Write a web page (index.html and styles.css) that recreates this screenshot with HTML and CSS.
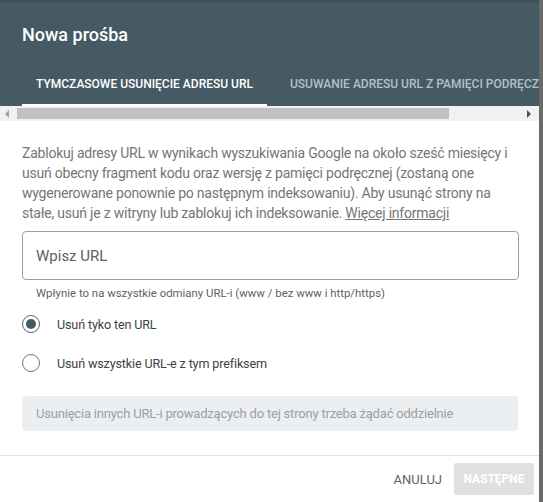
FILE: index.html
```html
<!DOCTYPE html>
<html lang="pl">
<head>
<meta charset="utf-8">
<title>Nowa prośba</title>
<link rel="stylesheet" href="styles.css">
</head>
<body>
<div class="dialog">
  <header class="header">
    <h1 class="title">Nowa prośba</h1>
    <nav class="tabs">
      <div class="tab tab-active">Tymczasowe usunięcie adresu URL</div>
      <div class="tab">Usuwanie adresu URL z pamięci podręcznej</div>
    </nav>
  </header>
  <div class="scrollbar">
    <span class="arrow arrow-left"></span>
    <div class="track"><div class="thumb"></div></div>
    <span class="arrow arrow-right"></span>
  </div>
  <main class="content">
    <p class="desc">Zablokuj adresy URL w wynikach wyszukiwania Google na około sześć miesięcy i usuń obecny fragment kodu oraz wersję z pamięci podręcznej (zostaną one wygenerowane ponownie po następnym indeksowaniu). Aby usunąć strony na stałe, usuń je z witryny lub zablokuj ich indeksowanie. <a class="link" href="#">Więcej informacji</a></p>
    <div class="field">
      <input class="input" type="text" placeholder="Wpisz URL">
    </div>
    <div class="hint">Wpłynie to na wszystkie odmiany URL-i (www / bez www i http/https)</div>
    <div class="radios">
      <label class="radio"><span class="circle circle-on"></span><span class="radio-label">Usuń tyko ten URL</span></label>
      <label class="radio"><span class="circle"></span><span class="radio-label">Usuń wszystkie URL-e z tym prefiksem</span></label>
    </div>
    <div class="info">Usunięcia innych URL-i prowadzących do tej strony trzeba żądać oddzielnie</div>
  </main>
  <footer class="footer">
    <button class="btn btn-text">Anuluj</button>
    <button class="btn btn-disabled">Następne</button>
  </footer>
</div>
</body>
</html>
```

FILE: styles.css
```css
html, body {
  margin: 0;
  padding: 0;
  height: 100%;
}
body {
  background: #6a6a6a;
  font-family: Roboto, "Noto Sans", "Liberation Sans", sans-serif;
  overflow: hidden;
}
.dialog {
  width: 539px;
  height: 502px;
  background: #ffffff;
  display: flex;
  flex-direction: column;
}
.header {
  background: #455a64;
  border-top: 2px solid #3e5059;
  padding: 0 0 0 22px;
  height: 104px;
  display: flex;
  flex-direction: column;
  overflow: hidden;
}
.title {
  margin: 0;
  padding-top: 21px;
  font-size: 18px;
  line-height: 24px;
  font-weight: 500;
  color: #ffffff;
  letter-spacing: 0;
}
.tabs {
  display: flex;
  margin-top: 17px;
  white-space: nowrap;
  gap: 9px;
}
.tab {
  height: 40px;
  padding: 0 14px;
  display: flex;
  align-items: center;
  font-size: 12px;
  font-weight: 500;
  text-transform: uppercase;
  color: #b4c0c6;
  border-bottom: 2px solid transparent;
  flex-shrink: 0;
}
.tab-active {
  color: #ffffff;
  border-bottom-color: #ffffff;
}
.scrollbar {
  height: 15px;
  background: #f1f1f1;
  display: flex;
  align-items: center;
}
.arrow {
  width: 17px;
  height: 15px;
  position: relative;
  flex-shrink: 0;
}
.arrow::after {
  content: "";
  position: absolute;
  top: 4px;
  width: 0;
  height: 0;
  border-top: 4px solid transparent;
  border-bottom: 4px solid transparent;
}
.arrow-left::after {
  left: 5px;
  border-right: 4px solid #a3a3a3;
}
.arrow-right::after {
  left: 5px;
  border-left: 4px solid #505050;
}
.track {
  flex: 1;
  height: 11px;
}
.thumb {
  width: 432px;
  height: 11px;
  background: #c1c1c1;
}
.content {
  flex: 1;
  padding: 22px 20px 0 22px;
}
.desc {
  margin: 0;
  font-size: 14px;
  line-height: 20px;
  letter-spacing: -0.22px;
  color: #757575;
}
.link {
  color: #757575;
  text-decoration: underline;
}
.field {
  margin-top: 8px;
}
.input {
  box-sizing: border-box;
  width: 497px;
  height: 49px;
  border: 1px solid #9e9e9e;
  border-radius: 4px;
  padding: 0 13px;
  font-family: inherit;
  font-size: 15px;
  color: #212121;
  outline: none;
  display: block;
}
.input::placeholder {
  color: #616161;
}
.hint {
  margin-top: 5px;
  padding-left: 14px;
  font-size: 11.4px;
  line-height: 16px;
  color: #5f5f5f;
}
.radios {
  display: flex;
  flex-direction: column;
  gap: 21px;
  margin-top: 14px;
}
.radio {
  display: flex;
  align-items: center;
  height: 18px;
}
.circle {
  box-sizing: border-box;
  width: 18px;
  height: 18px;
  border: 1.5px solid #757575;
  border-radius: 50%;
  margin-right: 17px;
  display: flex;
  align-items: center;
  justify-content: center;
  flex-shrink: 0;
}
.circle-on {
  border-color: #616161;
}
.circle-on::after {
  content: "";
  width: 10px;
  height: 10px;
  border-radius: 50%;
  background: #455a64;
}
.radio-label {
  font-size: 12.6px;
  letter-spacing: -0.15px;
  color: #424242;
}
.info {
  margin-top: 24px;
  width: 496px;
  box-sizing: border-box;
  height: 35px;
  padding: 0 14px;
  display: flex;
  align-items: center;
  background: #eceff1;
  border-radius: 4px;
  font-size: 13px;
  letter-spacing: -0.2px;
  color: #9e9e9e;
}
.footer {
  border-top: 1px solid #e0e0e0;
  height: 47px;
  box-sizing: border-box;
  display: flex;
  justify-content: flex-end;
  align-items: flex-start;
  padding: 7px 5px 0 0;
  gap: 4px;
}
.btn {
  font-family: inherit;
  font-size: 12px;
  text-transform: uppercase;
  height: 32px;
  min-width: 64px;
  padding: 0 8px;
  border: none;
  border-radius: 2px;
  background: transparent;
  cursor: pointer;
}
.btn-text {
  color: #616161;
  font-weight: 400;
  font-size: 13px;
}
.btn-disabled {
  width: 80px;
  background: #e0e0e0;
  color: #ffffff;
  font-weight: 700;
}
```
